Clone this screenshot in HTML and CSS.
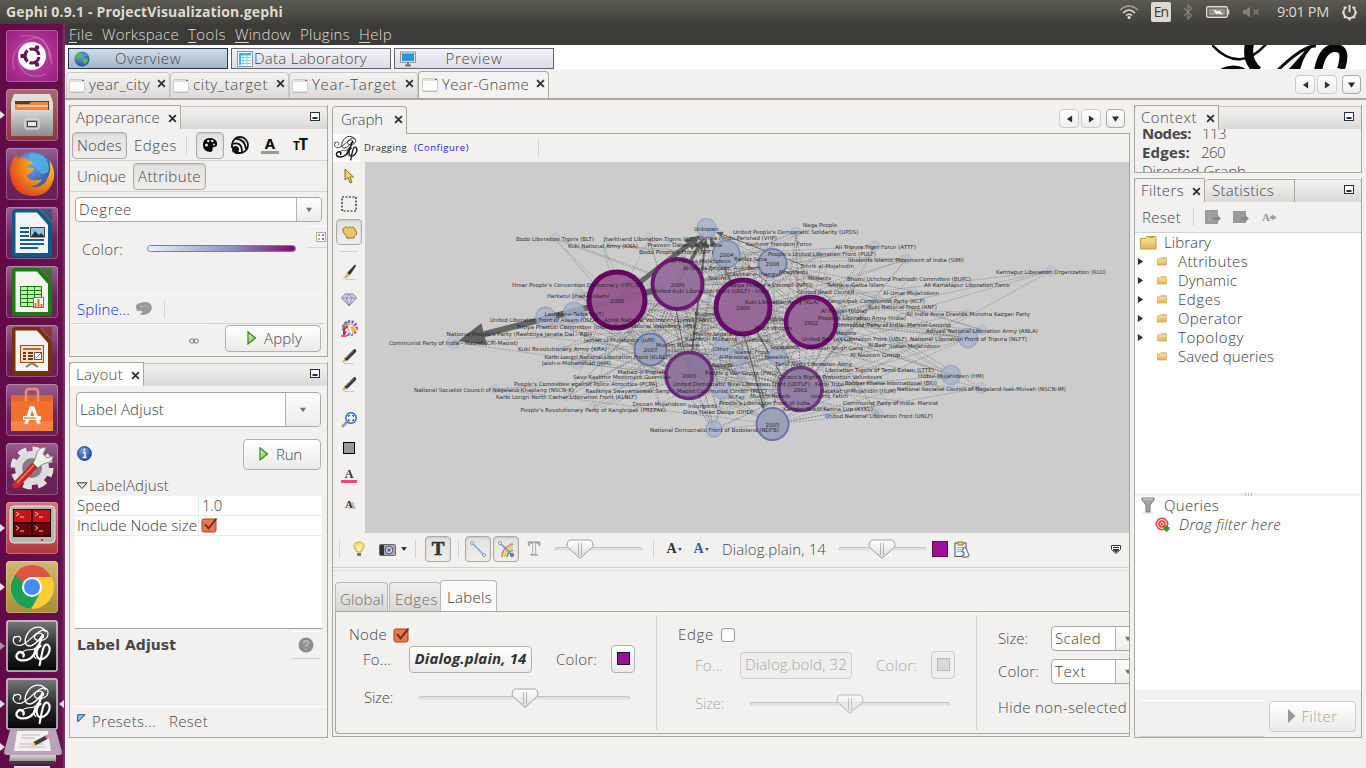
FILE: index.html
```html
<!DOCTYPE html>
<html lang="en">
<head>
<meta charset="utf-8">
<title>Gephi 0.9.1 - ProjectVisualization.gephi</title>
<link rel="stylesheet" href="styles.css">
</head>
<body>
<svg class="defs" width="0" height="0">
  <defs>
    <linearGradient id="metal" x1="0" y1="0" x2="0" y2="1"><stop offset="0" stop-color="#d8d8d6"/><stop offset="1" stop-color="#8c8c8a"/></linearGradient>
    <linearGradient id="blk" x1="0" y1="0" x2="0" y2="1"><stop offset="0" stop-color="#77787a"/><stop offset=".5" stop-color="#2b2c2e"/><stop offset="1" stop-color="#050505"/></linearGradient>
    <linearGradient id="thumb" x1="0" y1="0" x2="0" y2="1"><stop offset="0" stop-color="#fff"/><stop offset="1" stop-color="#dcdad8"/></linearGradient>
    <linearGradient id="green" x1="0" y1="0" x2="1" y2="1"><stop offset="0" stop-color="#e2f5cf"/><stop offset="1" stop-color="#6cc13a"/></linearGradient>
    <linearGradient id="folder" x1="0" y1="0" x2="0" y2="1"><stop offset="0" stop-color="#fbe7a5"/><stop offset="1" stop-color="#e0b450"/></linearGradient>
    <radialGradient id="blue" cx=".4" cy=".3" r=".8"><stop offset="0" stop-color="#6fa8ee"/><stop offset="1" stop-color="#173f96"/></radialGradient>
    <radialGradient id="fox" cx=".75" cy=".25" r=".9"><stop offset="0" stop-color="#ffd83a"/><stop offset=".5" stop-color="#f28a1e"/><stop offset="1" stop-color="#d9381e"/></radialGradient>
    <symbol id="gephi" viewBox="0 0 44 44">
      <g fill="none" stroke="currentColor" stroke-linecap="round">
        <path stroke-width="1.3" d="M4 12C0 17 4 23 11 21C20 18 26 6 34 5C41 5 40 14 33 16C27 18 22 14 26 10C30 7 35 9 34 13"/>
        <path stroke-width="1.5" d="M36 7C33 0 23 1 18 8C13 16 14 22 20 22C26 21 30 14 33 11"/>
        <path stroke-width="2.4" d="M33 11C30 19 27 31 20 35C13 39 4 37 6 31C9 26 15 29 13 33"/>
        <path stroke-width="1.2" d="M4 13C9 10 12 14 9 17M11 30C15 22 24 30 28 21C23 27 23 33 26 35"/>
        <path stroke-width="2.2" d="M31 22C25 25 26 35 31 36C38 35 43 26 39 21C34 18 33 27 30 42"/>
      </g>
    </symbol>
    <symbol id="win" viewBox="0 0 16 14"><rect x=".5" y=".5" width="15" height="12.5" rx="1.5" fill="#fdfdfd" stroke="#cfcdcb"/><path d="M1 2h14" stroke="#e2dfe3" stroke-width="2"/><path d="M13 1.500h2" stroke="#b04a68"/><path d="M1 13.500h14" stroke="#bbb"/></symbol>
    <symbol id="x" viewBox="0 0 8 8"><path d="M1 1L7 7M7 1L1 7" stroke="#2f2f2f" stroke-width="1.6"/></symbol>
    <symbol id="min" viewBox="0 0 10 9"><rect x=".5" y=".5" width="9" height="8" fill="#fff" stroke="#26303f"/><path d="M2.5 6h5" stroke="#26303f" stroke-width="2"/></symbol>
    <symbol id="knob" viewBox="0 0 28 20"><path d="M4 1h20q3 1 3 5q0 2-2 3.500L14.500 19h-1L3 9.500Q1 8 1 6q0-4 3-5z" fill="url(#thumb)" stroke="#a3a19e"/><path d="M12.500 4v12M15.500 4v12" stroke="#b4b2b0"/></symbol>
    <symbol id="play" viewBox="0 0 10 14"><path d="M1 1L8.500 7L1 13z" fill="url(#green)" stroke="#2d8a13" stroke-width="1.200"/></symbol>
    <symbol id="check" viewBox="0 0 17 16"><rect x="1" y="2" width="14" height="13" rx="2" fill="#f0764a" stroke="#a4451f"/><path d="M4 7L7.500 11.500L15.500 1.500" fill="none" stroke="#5a3527" stroke-width="2"/></symbol>
    <symbol id="pencil" viewBox="0 0 16 16"><path d="M3 11L12 2Q14 0 15 2T14 5L6 13z" fill="#3b3b3b"/><path d="M5 10L13 2.500" stroke="#777"/><path d="M3 11L6 13L1 15z" fill="#d9a94e"/><path d="M3 15.500h10" stroke="#c9c8c6"/></symbol>
    <symbol id="fold" viewBox="0 0 17 14"><path d="M.5 13V2.500h5l1-2h9.500V13z" fill="url(#folder)" stroke="#c99c3c"/><path d="M9 1.500h5" stroke="#4fb7e6"/></symbol>
    <symbol id="lt" viewBox="0 0 8 8"><path d="M7 0v8L1 4z" fill="#2e2e2e"/></symbol>
    <symbol id="rt" viewBox="0 0 8 8"><path d="M1 0v8L7 4z" fill="#2e2e2e"/></symbol>
    <symbol id="dn" viewBox="0 0 8 8"><path d="M0 1h8L4 7z" fill="#2e2e2e"/></symbol>
    <symbol id="doc" viewBox="0 0 40 48"><path d="M4 0H27L40 14V45Q40 48 37 48H3Q0 48 0 45V3Q0 0 4 0z" fill="currentColor"/><path d="M3.500 3.500H25L36 16V44H3.500z" fill="#f4f4f4"/><path d="M28 0H40V12z" fill="currentColor" opacity=".7"/></symbol>
  </defs>
</svg>

<header class="topbar">
  <span class="title" data-w="277">Gephi 0.9.1 - ProjectVisualization.gephi</span>
  <div class="tray">
    <svg width="20" height="14" viewBox="0 0 20 14" fill="none" stroke="#dfdbd2" stroke-width="1.600"><path d="M1 5Q10-3 19 5" opacity=".6"/><path d="M4 8Q10 2 16 8"/><path d="M7 10.500Q10 8 13 10.500"/><circle cx="10" cy="12.500" r=".8"/></svg>
    <span class="lang">En</span>
    <svg width="10" height="16" viewBox="0 0 10 16" fill="none" stroke="#85827b" stroke-width="1.300"><path d="M1 4L8.500 11.500L5 15V1L8.500 4.500L1 12"/></svg>
    <svg width="24" height="14" viewBox="0 0 24 14"><rect x=".7" y="1.700" width="20.600" height="10.600" rx="1.500" fill="none" stroke="#dfdbd2" stroke-width="1.400"/><rect x="2.500" y="3.500" width="17" height="7" fill="#96938c"/><path d="M22.500 4.500v5" stroke="#dfdbd2" stroke-width="1.500"/><path d="M7 4.500L12.500 6.500L13 5L17 9.500L11 8.500L10.500 9.500z" fill="#fff"/></svg>
    <svg width="18" height="12" viewBox="0 0 18 12"><path d="M1 4h3l4-3.500v11L4 8H1z" fill="#85827b"/><path d="M11.500 3.500l5 5m0-5l-5 5" stroke="#85827b" stroke-width="1.300"/></svg>
    <span class="clock" data-w="52">9:01 PM</span>
    <svg width="17" height="17" viewBox="0 0 17 17" fill="none" stroke="#dfdbd2"><path d="M5.500 3A6 6 0 1 0 11.500 3M8.500 1v7" stroke-width="1.900"/><path d="M1 8.500h2M14 8.500h2M8.500 14v2.500M3 3l1.500 1.500M14 3l-1.500 1.500M3 14l1.500-1.500M14 14l-1.500-1.500" stroke-width="2.200"/></svg>
  </div>
</header>

<div class="screen">
  <nav class="launcher">
    <div class="tile dash"><svg viewBox="0 0 52 52"><path d="M8 40Q2 20 22 10T46 34M14 6Q42 2 44 30M40 44Q20 52 12 32" fill="none" stroke="#e58ad0" opacity=".6"/><circle cx="26" cy="26" r="14" fill="#fff"/><circle cx="26" cy="26" r="7" fill="none" stroke="#6a1452" stroke-width="3.200" stroke-dasharray="12.400 2.260" stroke-dashoffset="-1"/><g fill="#6a1452"><circle cx="16.500" cy="26" r="2.300"/><circle cx="31" cy="17.500" r="2.300"/><circle cx="31" cy="34.500" r="2.300"/></g></svg></div>
    <div class="tile files"><i class="pip"></i><svg viewBox="0 0 52 52"><path d="M8 5h36l3 8v8H5v-8z" fill="#dededc"/><rect x="9" y="12" width="34" height="10" fill="#5c3a2a"/><path d="M9 15h14l2-2h17v8H9z" fill="#f0843c"/><path d="M11 17h31" stroke="#fff"/><rect x="5" y="21" width="42" height="26" rx="1" fill="url(#metal)"/><rect x="19" y="30" width="14" height="10" rx="2" fill="#aaa" stroke="#eee"/><rect x="21.500" y="32.500" width="9" height="5" fill="#eee" stroke="#444"/></svg></div>
    <div class="tile plain"><svg viewBox="0 0 52 52"><circle cx="27" cy="25" r="21" fill="url(#blue)"/><path d="M24 5Q39 4 42 15T36 26Q30 20 22 13z" fill="#53b6e8" opacity=".8"/><path d="M5 16Q8 8 11 7L12 11Q18 8 22 12L27 15Q20 18 20 20L28 20Q27 24 22 26Q20 30 26 32Q32 33 36 31Q33 38 24 38Q37 42 42 29Q46 21 43 12Q49 19 48 30Q44 48 26 48Q9 47 5 31Q3 23 5 16z" fill="url(#fox)"/></svg></div>
    <div class="tile plain writer"><svg viewBox="0 0 52 52"><svg x="6" y="2" width="40" height="48"><use href="#doc"/></svg><g stroke="#17618f" stroke-width="2"><path d="M14 21h9M14 25h9M14 29h9M14 33h24M14 37h24M14 41h18"/></g><rect x="24.500" y="20.500" width="14" height="9.500" fill="#8fc4e8" stroke="#444"/><path d="M25 30l4-6 4 4 2-2 4 4z" fill="#333"/></svg></div>
    <div class="tile plain calc"><svg viewBox="0 0 52 52"><svg x="6" y="2" width="40" height="48"><use href="#doc"/></svg><path d="M14.500 20.500h21v20h-21zM14.500 24.500h21M14.500 28.500h21M14.500 32.500h21M14.500 36.500h21M21.500 20.500v20M28.500 20.500v20" fill="#bdf0a8" stroke="#187d0c"/><rect x="27.500" y="31.500" width="10" height="10" fill="#fff" stroke="#777"/><path d="M29.500 41v-4M32.500 41v-8M35.500 41v-3" stroke="#e06a2c" stroke-width="2"/></svg></div>
    <div class="tile plain impress"><svg viewBox="0 0 52 52"><svg x="6" y="2" width="40" height="48"><use href="#doc"/></svg><rect x="14.500" y="20.500" width="23" height="17" fill="#fbe3cf" stroke="#a84a10"/><path d="M17 24h18" stroke="#d06020" stroke-width="2"/><path d="M17 28h3m2 0h5M17 31h3m2 0h5M17 34h3m2 0h5" stroke="#7a3008" stroke-width="2"/><rect x="28.500" y="27.500" width="7" height="7" fill="#fff" stroke="#555"/><path d="M30 33l5-5" stroke="#3a3"/><path d="M20 42l6-4 6 4" stroke="#777" stroke-width="2" fill="none"/></svg></div>
    <div class="tile plain"><svg viewBox="0 0 52 52"><path d="M5 11h42v36H5z" fill="#f0702c"/><path d="M5 11h42v6H5z" fill="#d9682f"/><path d="M5 37h42v10H5z" fill="#f78442"/><path d="M20 17V8q0-3 3-3h6q3 0 3 3v9" fill="none" stroke="#eb9068" stroke-width="2.500"/><path d="M20 40L25 24h2l6 16" fill="none" stroke="#fff" stroke-width="3.500"/><path d="M17 34h18" stroke="#fff" stroke-width="4"/><path d="M18 34h12" stroke="#f0702c" stroke-width="1.200"/></svg></div>
    <div class="tile plain"><svg viewBox="0 0 52 52"><circle cx="26" cy="25" r="18.500" fill="none" stroke="#e2e2e2" stroke-width="6" stroke-dasharray="8.500 6.030"/><circle cx="26" cy="25" r="13.500" fill="#8a7a86" stroke="#dcdcdc" stroke-width="7"/><path d="M10 42L29 22" stroke="#c9281f" stroke-width="7" stroke-linecap="round"/><path d="M11 40L28 22" stroke="#f08070" stroke-width="1.500"/><path d="M27 20Q30 16 31 9Q35 3 40 5L37 11L41 15L47 13Q47 19 40 20Q35 21 32 25z" fill="#f0f0ee" stroke="#888"/></svg></div>
    <div class="tile term"><i class="pip"></i><svg viewBox="0 0 52 52"><rect x="4" y="4" width="45" height="37" rx="4" fill="#b6b6b0" stroke="#e8e8e4"/><rect x="7" y="7" width="38" height="28" fill="#2a0505"/><path d="M8 8h17v12H8zM27 8h17v12H27z" fill="#c81414"/><path d="M8 22h17v11H8zM27 22h17v11H27z" fill="#6d0606"/><g fill="none" stroke="#f3b9b9"><path d="M10 10l3 2-3 2m4 1h4M29 10l3 2-3 2m4 1h4M10 24l3 2-3 2m4 1h4M29 24l3 2-3 2m4 1h4"/></g><circle cx="36" cy="38" r="1" fill="#e00"/></svg></div>
    <div class="tile chrome"><i class="pip"></i><svg viewBox="0 0 52 52"><circle cx="26" cy="26" r="22" fill="#fccb38"/><path d="M26 26L8 15Q14 4 26 4Q39 4 45 16H26z" fill="#dd5446"/><path d="M26 26L8.500 14.500Q0 28 10 41Q16 47 25 48L34 32z" fill="#1e9f58"/><circle cx="26" cy="26" r="10" fill="#fff"/><circle cx="26" cy="26" r="8" fill="#4a8af4"/></svg></div>
    <div class="tile geph"><i class="pip open"></i><svg viewBox="0 0 52 52"><rect x="1" y="1" width="50" height="50" rx="2" fill="url(#blk)" stroke="#cfcbd2" stroke-width="1.500"/><svg x="4" y="5" width="44" height="42" color="#fff"><use href="#gephi"/></svg></svg></div>
    <div class="tile geph last"><i class="pip"></i><i class="pip right"></i><svg viewBox="0 0 52 52"><rect x="1" y="1" width="50" height="50" rx="2" fill="url(#blk)" stroke="#cfcbd2" stroke-width="1.500"/><svg x="4" y="5" width="44" height="42" color="#fff"><use href="#gephi"/></svg></svg></div>
    <div class="stack"><i class="pip"></i><svg width="58" height="38" viewBox="0 0 58 38"><path d="M6 0h46l6 22q0 3-3 3H3q-3 0-3-3z" fill="#b9a3b8"/><path d="M13 1h31l3 20H10z" fill="#f2f0ee"/><path d="M18 5h18M17 8h14M16 14h24M15 17h26" stroke="#bdbdbd"/><path d="M30 14L43 7" stroke="#3d3d3d" stroke-width="4"/><path d="M42 7.500l5-2.500" stroke="#e58bb0" stroke-width="4"/><path d="M26 17l4-5 2 3.500z" fill="#e8d36a"/><path d="M6 25h46v7H5z" fill="url(#metal)"/><path d="M5 31h46v3H5z" fill="#3c3c3a"/><path d="M10 36h36v2H10z" fill="#ddd"/></svg></div>
  </nav>

  <main class="app">
    <div class="menubar">
      <span data-w="24"><u>F</u>ile</span><span data-w="77">Workspace</span><span data-w="38"><u>T</u>ools</span><span data-w="56"><u>W</u>indow</span><span data-w="50">Plugins</span><span data-w="33"><u>H</u>elp</span>
    </div>

    <div class="perspectives">
      <div class="persp on"><svg width="16" height="16" viewBox="0 0 16 16"><circle cx="8" cy="8" r="7.500" fill="url(#blue)"/><path d="M3 3q4-3 6 0l-2 3-3 1-1 2-2-2zM9 8l4-1 1 3-3 4-2-3zM11 2l3 3-3 0z" fill="#57b845"/></svg><span data-w="66">Overview</span></div>
      <div class="persp data"><svg width="16" height="16" viewBox="0 0 16 16"><rect x=".5" y=".5" width="15" height="15" fill="#fff" stroke="#7a9ab0"/><rect x="2" y="2" width="12" height="2.500" fill="#35b6e8"/><path d="M2 6.500h12M2 9.500h12M2 12.500h12M6 4v10M10 4v10" stroke="#86cfe8"/><path d="M3 4v10" stroke="#35b6e8" stroke-width="2"/></svg><span data-w="113">Data Laboratory</span></div>
      <div class="persp"><svg width="16" height="16" viewBox="0 0 16 16"><rect x=".5" y="1" width="15" height="10.500" fill="#dedede" stroke="#999"/><rect x="2" y="2.500" width="12" height="7.500" fill="#2f93d8"/><path d="M8 11v4M5 14.500h6" stroke="#777" stroke-width="2"/></svg><span data-w="57">Preview</span></div>
      <svg class="brand" width="140" height="24" viewBox="0 0 140 24" fill="none" stroke="#050808"><path d="M0 0Q28 30 56-3" stroke-width="2.500"/><path d="M38-3Q33 15 46 26" stroke-width="9"/><path d="M10 25Q22 20 32 25" stroke-width="4"/><path d="M66 25Q92 0 104 1" stroke-width="3"/><path d="M76 25Q88 12 96 2L103 0Q92 8 88 25z" fill="#050808" stroke="none"/><path d="M106 26Q110 3 123 3T129 24" stroke-width="8"/></svg>
    </div>

    <div class="wtabs">
      <div class="wtab t1"><svg><use href="#win"/></svg><span data-w="61">year_city</span><svg class="x"><use href="#x"/></svg></div>
      <div class="wtab t2"><svg><use href="#win"/></svg><span data-w="75">city_target</span><svg class="x"><use href="#x"/></svg></div>
      <div class="wtab t3"><svg><use href="#win"/></svg><span data-w="85">Year-Target</span><svg class="x"><use href="#x"/></svg></div>
      <div class="wtab t4 on"><svg><use href="#win"/></svg><span data-w="87">Year-Gname</span><svg class="x"><use href="#x"/></svg></div>
      <div class="navs"><b><svg><use href="#lt"/></svg></b><b><svg><use href="#rt"/></svg></b><b class="dd"><svg><use href="#dn"/></svg></b></div>
    </div>

    <div class="columns">
      <div class="col left">
        <section class="panel appearance">
          <div class="ptabs"><div class="ptab"><span data-w="84">Appearance</span><svg class="x"><use href="#x"/></svg></div><div class="strip"><svg class="min"><use href="#min"/></svg></div></div>
          <div class="row modes">
            <i></i><span class="tbtn"><span data-w="45">Nodes</span></span><i></i><span data-w="43">Edges</span><i class="vs"></i>
            <span class="tbtn"><svg width="16" height="16" viewBox="0 0 16 16"><path fill-rule="evenodd" d="M8 1q7 0 7 6.500Q15 10 12 10q-2 0-1.500 2T9 15Q1 15 1 8Q1 1 8 1zM3 8a1.500 1.500 0 1 0 3 0a1.500 1.500 0 1 0-3 0M5 4a1.300 1.300 0 1 0 2.600 0a1.300 1.300 0 1 0-2.600 0M9 4a1.300 1.300 0 1 0 2.600 0a1.300 1.300 0 1 0-2.600 0M11 7.500a1 1 0 1 0 2 0a1 1 0 1 0-2 0" fill="#000"/></svg></span>
            <svg width="20" height="20" viewBox="0 0 20 20" fill="none" stroke="#111" stroke-width="1.800"><path d="M2 13V9.500A8 8 0 1 1 10 18H5M2 9Q12 6 12 17M5 3.500Q15 4 16 14"/><circle cx="5.500" cy="14.500" r="3.500" fill="#111" stroke="none"/></svg>
            <span class="acol">A</span>
            <span class="tt"><small>T</small>T</span>
          </div>
          <div class="row kinds"><span data-w="49">Unique</span><span class="tbtn"><span data-w="63">Attribute</span></span></div>
          <div class="combo c1"><span data-w="53">Degree</span><b><svg><use href="#dn"/></svg></b></div>
          <div class="row color"><span data-w="41">Color:</span><div class="ramp"></div><div class="pal"><svg width="10" height="10" viewBox="0 0 10 10"><rect x=".5" y=".5" width="9" height="9" fill="#fff" stroke="#aaa"/><path d="M2 2h2v2H2z" fill="#7ac36a"/><path d="M6 2h2v2H6z" fill="#e0559a"/><path d="M2 6h2v2H2z" fill="#f0a03c"/><path d="M6 6h2v2H6z" fill="#6a6ad0"/></svg></div></div>
          <div class="row spline"><span data-w="53">Spline...</span><svg width="18" height="16" viewBox="0 0 18 16"><path d="M2 10Q-1 3 5 2Q14-1 16 4Q18 8 15 11Q12 14 6 14Q4 13 8 11Q5 9 2 10z" fill="#9b9a98"/><path d="M5 5l3 1m2-2l3 2" stroke="#c4c3c1"/></svg><i></i></div>
          <div class="row apply"><div class="linkbox"><svg width="10" height="6" viewBox="0 0 10 6" fill="none" stroke="#777"><rect x=".5" y="1" width="5" height="4" rx="2"/><rect x="4.500" y="1" width="5" height="4" rx="2"/></svg></div><span class="btn"><svg class="play"><use href="#play"/></svg><span data-w="38">Apply</span></span></div>
        </section>

        <section class="panel layout">
          <div class="ptabs"><div class="ptab white"><span data-w="47">Layout</span><svg class="x"><use href="#x"/></svg></div><div class="strip"><svg class="min"><use href="#min"/></svg></div></div>
          <div class="combo c2"><span data-w="84">Label Adjust</span><b><svg><use href="#dn"/></svg></b></div>
          <div class="row run"><svg width="15" height="15" viewBox="0 0 15 15"><circle cx="7.500" cy="7.500" r="6.900" fill="url(#blue)" stroke="#1d4790"/><path d="M6 6.500h2v5M5.500 11.500h4" stroke="#fff" stroke-width="1.500" fill="none"/><circle cx="7.500" cy="3.700" r="1.100" fill="#fff"/></svg><span class="btn"><svg class="play"><use href="#play"/></svg><span data-w="26">Run</span></span></div>
          <div class="group"><svg width="12" height="8" viewBox="0 0 12 8"><path d="M1 .8h10L6 6.500z" fill="none" stroke="#333"/></svg><span data-w="80">LabelAdjust</span></div>
          <div class="props">
            <div class="prop"><span><em data-w="43">Speed</em></span><span><em data-w="20">1.0</em></span></div>
            <div class="prop"><span><em data-w="120">Include Node size</em></span><span class="ck"><svg width="17" height="16"><use href="#check"/></svg></span></div>
          </div>
          <div class="desc"><strong data-w="99">Label Adjust</strong><div class="help"><svg width="16" height="16" viewBox="0 0 16 16"><circle cx="8" cy="8" r="7.500" fill="#8d8c8b"/><path d="M5.500 6.500Q5.500 4 8 4T10.500 6.500Q10 8 8 8.500V10M8 11.200V13" fill="none" stroke="#b9b8b7" stroke-width="1.800"/></svg></div></div>
          <div class="presets"><svg width="9" height="9" viewBox="0 0 9 9"><path d="M.7.700h7.300L.7 8z" fill="#8fc0ee" stroke="#1f5591"/></svg><span data-w="64">Presets...</span><span data-w="39">Reset</span></div>
        </section>
      </div>

      <section class="graphpanel">
        <div class="gtabs"><div class="gtab"><span data-w="42">Graph</span><svg class="x"><use href="#x"/></svg></div><div class="navs"><b><svg><use href="#lt"/></svg></b><b><svg><use href="#rt"/></svg></b><b class="dd"><svg><use href="#dn"/></svg></b></div></div>
        <div class="gbody">
          <div class="status"><div class="glogo"><svg width="26" height="26"><use href="#gephi"/></svg></div><span data-w="43">Dragging</span><a data-w="55">(Configure)</a><i></i></div>
          <div class="work">
            <div class="tools">
              <div><svg width="10" height="16" viewBox="0 0 10 16"><path d="M1 1v11l3-2.500L6 15l2-1-2-5h3.500z" fill="#f2cf7a" stroke="#8f6a20"/></svg></div>
              <div><svg width="16" height="16" viewBox="0 0 16 16"><rect x="1" y="1" width="14" height="14" fill="none" stroke="#111" stroke-width="1.200" stroke-dasharray="2 1.500"/></svg></div>
              <div><span class="tbtn"><svg width="15" height="13" viewBox="0 0 16 14"><path d="M1 3l3-2 2 1 2-1.500 2 1.500 2-1 2 2v2l1.500 1v3l-2.500 2.500V13H5v-2L3 9 1 6z" fill="#eec56c" stroke="#8f6a28"/></svg></span></div>
              <hr>
              <div><svg width="16" height="16" viewBox="0 0 16 16"><path d="M6 9L14 .5 15 2 9 11z" fill="#333"/><path d="M6 9l3 2-3 3-5 .5 3-2z" fill="#d8b564"/><path d="M4 15.500h10" stroke="#ccc"/></svg></div>
              <div><svg width="16" height="15" viewBox="0 0 16 15"><path d="M4 1h8l3.500 4L8 13 .5 5z" fill="#cfcfe8" stroke="#8785ac"/><path d="M.5 5h15M5 5l3 8 3-8-3-4z" fill="none" stroke="#9492b6"/></svg></div>
              <div><svg width="17" height="17" viewBox="0 0 17 17"><circle cx="9" cy="8" r="6.500" fill="none" stroke="#8b52cc" stroke-width="3" stroke-dasharray="2 1.500"/><path d="M2 8a7 7 0 0 1 6-6" fill="none" stroke="#53b04b" stroke-width="2.500" stroke-dasharray="2 1.500"/><path d="M5 5l6-1 5 5-6 6z" fill="#f4f0ea" stroke="#b9a"/><path d="M9 7l3-1 3 4-3 3z" fill="#f2b62f"/><path d="M3 15V9l4-3" stroke="#cf2a2a" stroke-width="2" fill="none"/><path d="M0 16h6" stroke="#d33" stroke-width="1.500"/></svg></div>
              <div><svg width="16" height="16"><use href="#pencil"/></svg></div>
              <div><svg width="16" height="16"><use href="#pencil"/></svg></div>
              <div class="gap"><svg width="16" height="17" viewBox="0 0 16 17"><path d="M1 15l5-5" stroke="#999" stroke-width="2.500"/><circle cx="10" cy="6" r="5.200" fill="#eef4ff" stroke="#2d5fd2" stroke-width="1.400"/><path d="M7.500 5V3.500H9M11 3.500h1.500V5M12.500 7v1.500H11M9 8.500H7.500V7" fill="none" stroke="#2d5fd2" stroke-width="1.200"/></svg></div>
              <div><svg width="12" height="12"><rect x=".5" y=".5" width="11" height="11" fill="#999" stroke="#000"/></svg></div>
              <div><span class="pink">A</span></div>
              <div><span class="shade">A</span></div>
            </div>
            <svg id="graph" width="764" height="371" viewBox="365 162 764 371"></svg>
          </div>
          <div class="vizbar">
            <i class="vs"></i>
            <svg width="12" height="17" viewBox="0 0 12 17"><path d="M4 11Q1 8 1 5.500Q1 1 6 1t5 4.500Q11 8 8 11z" fill="#f8e36c" stroke="#c2a93c"/><path d="M4 12h4v3H4z" fill="#777"/><path d="M4.500 5L6 10l1.500-5" fill="none" stroke="#fff"/></svg>
            <svg width="17" height="13" viewBox="0 0 17 13"><rect x=".5" y="1.500" width="16" height="11" rx="1" fill="#a9abb0" stroke="#666"/><path d="M1 2h4v10H1z" fill="#333"/><circle cx="10" cy="7" r="3.800" fill="#d7dbe6" stroke="#4a5368"/><circle cx="10" cy="7" r="1.700" fill="#4f67a5"/></svg>
            <svg width="6" height="4"><path d="M0 0h6L3 4z" fill="#333"/></svg>
            <i class="vs"></i>
            <span class="tbtn sq"><span class="bigT">T</span></span>
            <i class="vs"></i>
            <span class="tbtn sq"><svg width="18" height="18" viewBox="0 0 18 18"><path d="M3 3l12 12" stroke="#6fa0d8" stroke-width="1.300"/><circle cx="3" cy="3" r="1.500" fill="#fff" stroke="#6fa0d8"/><circle cx="15" cy="15" r="1.500" fill="#fff" stroke="#6fa0d8"/></svg></span>
            <i></i>
            <span class="tbtn sq"><svg width="18" height="18" viewBox="0 0 18 18" fill="none"><path d="M5 17Q5 7 16 4" stroke="#e78a76" stroke-width="2"/><path d="M7.500 17Q8 9 16 7" stroke="#e8cf5e" stroke-width="2"/><path d="M10 17Q11 11 16 10" stroke="#6cbb5f" stroke-width="2"/><path d="M3 3l12 12" stroke="#6f88d8" stroke-width="1.300"/><circle cx="3" cy="3" r="1.500" fill="#fff" stroke="#6fa0d8"/><circle cx="15" cy="15" r="1.500" fill="#b9e" stroke="#53c"/></svg></span>
            <span class="outT">T</span>
            <i></i>
            <div class="slider"><svg style="left:10px"><use href="#knob"/></svg></div>
            <i class="vs"></i>
            <span class="fa">A<svg width="4" height="3"><path d="M0 0h4L2 3z" fill="#2e58b8"/></svg></span>
            <span class="fa bl">A<svg width="4" height="3"><path d="M0 0h4L2 3z" fill="#2e58b8"/></svg></span>
            <i></i>
            <span class="dlg" data-w="104">Dialog.plain, 14</span>
            <i></i>
            <div class="slider"><svg style="left:28px"><use href="#knob"/></svg></div>
            <i></i>
            <span class="swatch"></span>
            <i></i>
            <svg width="16" height="17" viewBox="0 0 16 17"><rect x="1" y="2" width="11" height="13.500" fill="#eef3fa" stroke="#44546e"/><path d="M4 1h5v3H4z" fill="#f5d27a" stroke="#a07620"/><path d="M3 6.500h7M3 8.500h4M3 10.500h4" stroke="#9fb2d0"/><path d="M9 7q4-1 4 3l2 4q0 2-2 2H8q-1-2 2-2V11H8q-1-2 1-2z" fill="#fff" stroke="#44546e"/></svg>
            <i></i>
            <svg class="more" width="10" height="9" viewBox="0 0 10 9"><path d="M.5.500h9v4L5 8.500.5 4.500z" fill="#fff" stroke="#333"/><path d="M2 2.500h6" stroke="#333"/><path d="M2 4.500h6L5 7z" fill="#333" stroke="#333"/></svg>
          </div>
          <div class="setTabs"><span class="st"><b data-w="44">Global</b></span><span class="st"><b data-w="43">Edges</b></span><span class="st on"><b data-w="45">Labels</b></span></div>
          <div class="settings">
            <div class="set">
              <div class="line l1"><span data-w="38">Node</span><svg width="17" height="16"><use href="#check"/></svg></div>
              <div class="line l2"><span data-w="28">Fo...</span><span class="btn font bi"><span data-w="112">Dialog.plain, 14</span></span><span class="cl" data-w="41">Color:</span><span class="btn chip"><i></i></span></div>
              <div class="line l3"><span data-w="29">Size:</span><div class="slider wide"><svg style="left:91px"><use href="#knob"/></svg></div></div>
            </div>
            <div class="set two">
              <div class="line l1"><span data-w="36">Edge</span><i class="box"></i></div>
              <div class="line l2"><span data-w="28">Fo...</span><span class="btn font"><span data-w="102">Dialog.bold, 32</span></span><span class="cl" data-w="41">Color:</span><span class="btn chip"><i></i></span></div>
              <div class="line l3"><span data-w="29">Size:</span><div class="slider wide"><svg style="left:85px"><use href="#knob"/></svg></div></div>
            </div>
            <div class="set three">
              <div class="opt"><span data-w="30">Size:</span><div class="combo"><span data-w="46">Scaled</span><b><svg><use href="#dn"/></svg></b></div></div>
              <div class="opt"><span data-w="41">Color:</span><div class="combo"><span data-w="31">Text</span><b><svg><use href="#dn"/></svg></b></div></div>
              <div class="hide"><span data-w="129">Hide non-selected</span></div>
            </div>
          </div>
        </div>
      </section>

      <div class="col right">
        <section class="panel context">
          <div class="ptabs"><div class="ptab"><span data-w="56">Context</span><svg class="x"><use href="#x"/></svg></div><div class="strip"><svg class="min"><use href="#min"/></svg></div></div>
          <div class="clip"><div class="stats">
            <div><strong data-w="49">Nodes:</strong><span data-w="24">113</span></div>
            <div><strong data-w="48">Edges:</strong><span data-w="24">260</span></div>
            <div><span data-w="104">Directed Graph</span></div>
          </div></div>
        </section>
        <section class="panel filters">
          <div class="ptabs"><div class="ptab"><span data-w="43">Filters</span><svg class="x"><use href="#x"/></svg></div><div class="ptab off"><span data-w="62">Statistics</span></div><div class="strip"><svg class="min"><use href="#min"/></svg></div></div>
          <div class="fbar"><span data-w="39">Reset</span><i></i><svg width="17" height="16" viewBox="0 0 17 16"><path d="M1 1h13v14H1z" fill="#9b9a99"/><path d="M2 4h11M2 7h11M2 10h11M5 2v12" stroke="#a9a8a7"/><path d="M9 8h4V6l4 3.500-4 3.500v-2H9z" fill="#8b8a89"/></svg><svg width="17" height="16" viewBox="0 0 17 16"><path d="M1 2h13v12H1z" fill="#9b9a99"/><path d="M9 8h4V6l4 3.500-4 3.500v-2H9z" fill="#8b8a89"/></svg><span class="aplus">A<svg width="7" height="7" viewBox="0 0 9 8"><path d="M0 3h3V1l5 3-5 3V5H0z" fill="#999" stroke="#999"/></svg></span></div>
          <div class="tree">
            <div class="root"><svg width="17" height="14"><use href="#fold"/></svg><span data-w="47">Library</span></div>
            <div class="node"><svg class="ar"><use href="#rt"/></svg><svg class="fo"><use href="#fold"/></svg><span data-w="70">Attributes</span></div>
            <div class="node"><svg class="ar"><use href="#rt"/></svg><svg class="fo"><use href="#fold"/></svg><span data-w="59">Dynamic</span></div>
            <div class="node"><svg class="ar"><use href="#rt"/></svg><svg class="fo"><use href="#fold"/></svg><span data-w="43">Edges</span></div>
            <div class="node"><svg class="ar"><use href="#rt"/></svg><svg class="fo"><use href="#fold"/></svg><span data-w="65">Operator</span></div>
            <div class="node"><svg class="ar"><use href="#rt"/></svg><svg class="fo"><use href="#fold"/></svg><span data-w="66">Topology</span></div>
            <div class="node"><svg class="ar"></svg><svg class="fo"><use href="#fold"/></svg><span data-w="96">Saved queries</span></div>
          </div>
          <div class="split"><i></i><i></i><i></i></div>
          <div class="queries">
            <div class="q1"><svg width="14" height="17" viewBox="0 0 14 17"><path d="M1 1h12v2L9 8v7H5V8L1 3z" fill="#a5a5b0" stroke="#777"/><path d="M2 2h10" stroke="#ddd"/><path d="M2 16h10" stroke="#ccc"/></svg><span data-w="55">Queries</span></div>
            <div class="q2"><svg width="16" height="16" viewBox="0 0 16 16"><circle cx="7" cy="7" r="6.500" fill="#e9434a"/><circle cx="7" cy="7" r="4.300" fill="none" stroke="#fbd4d4" stroke-width="1.300"/><circle cx="7" cy="7" r="1.600" fill="none" stroke="#fbd4d4"/><path d="M11.500 8.500v6M8.500 11.500h6" stroke="#22a522" stroke-width="2.800"/></svg><span data-w="102">Drag filter here</span></div>
          </div>
          <div class="ffoot"><div class="fl"></div><span class="btn"><svg width="8" height="14"><path d="M0 0l7.500 7L0 14z" fill="#999"/></svg><span data-w="36">Filter</span></span></div>
        </section>
      </div>
    </div>
  </main>
</div>
<script src="script.js"></script>
</body>
</html>
```

FILE: styles.css
```css
* { box-sizing: border-box; }
body {
  margin: 0; width: 1366px; height: 768px; overflow: hidden;
  background: #f2f1f0; color: #484848;
  font: 300 15px/19px "Open Sans", "Noto Sans", sans-serif;
  display: flex; flex-direction: column;
}
svg { display: block; flex: none; }
i, em { font-style: normal; }
b { font-weight: 300; }
.defs { position: absolute; }
[data-w] { white-space: nowrap; display: inline-block; flex: none; }

.topbar { height: 24px; flex: none; background: linear-gradient(#5b5a52, #403f3a); display: flex; justify-content: space-between; padding: 0 8px 0 6px; align-items: center; color: #dfdbd2; }
.title { font: 700 14px/24px "Open Sans", sans-serif; }
.tray { display: flex; align-items: center; }
.lang { width: 20px; height: 20px; background: #dfdbd2; color: #3c3b37; border-radius: 2px; font: 500 14px/20px "Open Sans", sans-serif; text-align: center; margin: 0 12px 0 12px; letter-spacing: -1px; }
.tray svg:nth-of-type(2) { margin-right: 13px; }
.tray svg:nth-of-type(3) { margin-right: 12px; }
.clock { font: 400 14.500px/24px "Open Sans", sans-serif; margin: 0 12px 0 17px; }

.screen { display: flex; flex: 1; min-height: 0; }
.launcher { width: 65px; flex: none; background: linear-gradient(90deg, #620947 0, #68104f 62px, #7d3068 64px); padding: 6px 0 0 6px; display: flex; flex-direction: column; gap: 7px; overflow: hidden; }
.tile { position: relative; width: 52px; height: 52px; flex: none; border-radius: 4px; box-shadow: inset 0 0 0 1px rgba(255,255,255,.25); background: linear-gradient(#9a5f8b, #6d2359 60%, #6a2057); }
.tile > svg { width: 52px; height: 52px; }
.dash { background: radial-gradient(#c04aa6, #971b7d); }
.files { background: linear-gradient(#a96a70, #8a3340); }
.term { background: linear-gradient(#d2767a, #b3383f); }
.chrome { background: linear-gradient(#d0b978, #ab8b35); }
.plain.writer { color: #0e5a86; }
.plain.calc { color: #187d0c; }
.plain.impress { color: #7a3008; }
.geph { box-shadow: none; }
.last { margin-top: -1px; }
.pip { position: absolute; left: -6px; top: 22px; border: 4px solid transparent; border-left: 5px solid #e6dfe4; border-right: 0; }
.pip.right { left: 53px; border-left: 0; border-right: 5px solid #e6dfe4; }
.pip.open { border-left-color: #ae8ca6; }
.stack { position: relative; margin: -7px 0 0 -2px; }
.stack .pip { left: -4px; top: 13px; }

.app { flex: 1; display: flex; flex-direction: column; min-width: 0; }
.menubar { height: 21px; flex: none; background: #3c3b37; color: #dfdbd2; display: flex; padding-left: 4px; gap: 9px; line-height: 21px; }
.menubar u { text-underline-offset: 2px; text-decoration-thickness: 1px; }
.perspectives { height: 24px; flex: none; background: #fff; display: flex; padding: 3px 0 0 3px; gap: 3px; }
.persp { width: 160px; height: 21px; border: 1px solid #5f6470; background: linear-gradient(#f2f2f7, #dcdde6); display: flex; align-items: center; padding-left: 5px; }
.persp.on { border-color: #25364c; background: linear-gradient(#cfdcea, #a3b5ce); }
.persp span { flex: 1; text-align: center; padding-right: 21px; }
.persp.data span { padding: 0; flex: none; margin-left: 1px; }
.brand { margin-left: auto; margin-right: 14px; margin-top: -3px; }

.wtabs { height: 31px; flex: none; display: flex; align-items: flex-end; border-bottom: 2px solid #aca89f; padding-left: 1px; }
.wtab { height: 26px; border: 1px solid #c9c7c4; border-bottom: 0; border-radius: 4px 4px 0 0; background: linear-gradient(#f4f3f2, #dddbd9); display: flex; align-items: center; padding: 0 0 2px 2px; }
.wtab.on { height: 27px; background: #f4f3f2; border-color: #aaa79f; padding-left: 3px; }
.wtab > svg:first-child { width: 16px; height: 14px; margin-right: 4px; margin-top: 2px; }
.x { width: 9px; height: 9px; }
.wtab .x { margin-left: auto; margin-right: 3px; margin-bottom: 2px; }
.t1 { width: 104px; } .t2 { width: 119px; } .t3 { width: 129px; } .t4 { width: 131px; }
.navs { margin-left: auto; display: flex; gap: 2px; }
.wtabs .navs { margin-right: 5px; margin-bottom: 4px; }
.navs b { width: 20px; height: 19px; border: 1px solid #cfcdca; border-radius: 4px; background: linear-gradient(#fff, #efeeed); display: flex; align-items: center; justify-content: center; }
.navs b svg { width: 7px; height: 8px; }
.navs .dd { border-color: #aaa8a5; margin-left: 3px; width: 19px; }

.columns { flex: 1; display: grid; grid-template-columns: 259px 798px 228px; gap: 4px; padding: 5px 0 0 4px; }
.col { display: grid; align-content: start; }
.left { grid-template-rows: 252px 376px; row-gap: 5px; }
.right { grid-template-rows: 68px 560px; row-gap: 5px; }
.panel { border: 1px solid #aaa79f; border-top: 0; display: flex; flex-direction: column; overflow: hidden; }
.ptabs { display: flex; height: 24px; flex: none; align-items: flex-end; margin: 0 -1px; }
.ptab { height: 24px; border: 1px solid #aaa79f; border-bottom: 0; border-radius: 4px 0 0 0; background: #f2f1f0; display: flex; align-items: center; padding: 0 3px 1px 6px; }
.ptab.white { background: #fff; }
.ptab.off { background: linear-gradient(#f3f2f1, #dbd9d7); height: 23px; border-left: 0; }
.ptab .x { margin: 2px 0 0 auto; }
.strip { flex: 1; height: 23px; border: 1px solid #c6c4c0; border-left: 0; border-bottom: 0; border-radius: 0 4px 0 0; background: linear-gradient(#f3f2f1, #dbd9d7); display: flex; justify-content: flex-end; padding: 5px 7px; }
.min { width: 10px; height: 9px; }
.appearance .ptab { width: 112px; }
.layout .ptab { width: 75px; }
.row { flex: none; }
.tbtn { height: 27px; border: 1px solid #aeaba7; border-radius: 4px; background: linear-gradient(#e4e2e0, #efeeed); display: inline-flex; align-items: center; justify-content: center; box-shadow: inset 0 1px 2px rgba(0,0,0,.12); }
.modes { display: grid; grid-template-columns: 2px 55px 7px 43px 23px 28px 32px 28px 32px; height: 32px; align-items: center; justify-items: center; border-bottom: 1px solid #d5d3d0; padding-top: 1px; margin-right: -10px; }
.modes { grid-template-columns: 2px 55px 7px 43px 19px 28px 32px 28px 32px; }
.modes .tbtn { width: 100%; }
.vs { width: 1px; height: 18px; background: #d3d1ce; }
.acol { font: 700 15px/15px "Open Sans", sans-serif; color: #000; border-bottom: 3px solid #999; width: 18px; text-align: center; }
.tt { font: 700 16px/16px "Open Sans", sans-serif; color: #111; letter-spacing: -1px; }
.tt small { font-size: 12px; }
.kinds { display: flex; height: 31px; align-items: center; padding-left: 7px; border-bottom: 1px solid #d5d3d0; }
.kinds .tbtn { width: 73px; margin-left: 7px; }
.combo { border: 1px solid #aaa8a5; border-radius: 4px; background: #fff; display: flex; align-items: center; padding-left: 3px; color: #3c3c3c; }
.combo b { margin-left: auto; align-self: stretch; width: 25px; border-left: 1px solid #b4b2af; background: linear-gradient(#fdfdfd, #eeedec); border-radius: 0 4px 4px 0; display: flex; align-items: center; justify-content: center; }
.combo b svg { width: 8px; height: 6px; opacity: .65; }
.c1 { width: 247px; height: 25px; margin: 5px 0 0 5px; flex: none; }
.color { display: flex; align-items: center; height: 54px; padding-left: 12px; }
.ramp { width: 151px; height: 7px; margin-left: 24px; border: 1px solid #7d7f90; border-radius: 4px; background: linear-gradient(90deg, #e8f3f8, #8d95c8 55%, #7c0a7c); margin-bottom: 2px; }
.pal { width: 20px; height: 22px; border-top: 1px solid #fff; border-bottom: 1px solid #d8d6d4; margin: 0 0 24px 11px; padding: 5px 0 0 9px; }
.spline { height: 30px; margin-top: 18px; border-top: 1px solid #fbfbfb; border-bottom: 1px solid #d5d3d0; display: flex; align-items: center; padding-left: 7px; color: #1528f0; width: 254px; }
.spline svg { margin: 0 11px 0 5px; }
.spline i { width: 1px; height: 17px; background: #d3d1ce; }
.apply { display: flex; height: 33px; }
.linkbox { width: 136px; border-top: 1px solid #fbfbfb; border-bottom: 1px solid #d0cecb; display: flex; justify-content: flex-end; align-items: center; padding-right: 7px; }
.btn { border: 1px solid #b3b1ae; border-radius: 4px; background: linear-gradient(#fff, #ebeae8); display: inline-flex; align-items: center; justify-content: center; flex: none; padding-bottom: 1px; }
.apply .btn { width: 96px; height: 27px; margin: 1px 0 0 19px; gap: 7px; padding-left: 3px; }
.play { width: 10px; height: 14px; }

.c2 { width: 245px; height: 35px; margin: 6px 0 0 6px; flex: none; }
.c2 b { width: 35px; }
.run { display: flex; justify-content: space-between; align-items: center; padding: 0 6px 0 7px; height: 32px; margin-top: 12px; }
.run > svg { margin-bottom: 4px; }
.run .btn { width: 78px; height: 31px; gap: 7px; margin-bottom: 1px; padding-right: 3px; }
.group { display: flex; align-items: center; height: 25px; padding: 4px 0 0 6px; }
.group svg { margin-right: 1px; }
.props { height: 133px; margin: 0 5px; background: #fff; border-bottom: 1px solid #a5a3a0; color: #3c3c3c; }
.prop { display: grid; grid-template-columns: 124px 1fr; height: 20px; border-bottom: 1px solid #ecebea; line-height: 19px; }
.prop > span { padding-left: 2px; border-right: 1px solid #ecebea; white-space: nowrap; }
.prop > span + span { border: 0; padding-left: 3px; }
.prop .ck { padding: 1px 0 0 2px; }
.desc { height: 77px; display: flex; justify-content: space-between; padding: 2px 7px 0; }
.desc strong { font: 700 14px/28px "DejaVu Sans", sans-serif; }
.help { width: 28px; height: 28px; border-top: 1px solid #fff; border-bottom: 1px solid #d0cecb; padding: 5px 6px; }
.presets { border-top: 1px solid #fcfcfc; flex: 1; display: flex; padding: 5px 0 0 7px; }
.presets svg { margin: 2px 6px 0 0; }
.presets span + span { margin-left: 13px; }

.graphpanel { height: 632px; padding-top: 1px; display: flex; flex-direction: column; }
.gtabs { height: 28px; flex: none; display: flex; border-bottom: 1px solid #aaa79f; }
.gtab { width: 75px; margin-bottom: -1px; border: 1px solid #aaa79f; border-bottom: 0; border-radius: 4px 4px 0 0; background: #f2f1f0; display: flex; align-items: center; padding: 0 3px 2px 8px; }
.gtab .x { margin-left: auto; }
.gtabs .navs { padding: 3px 5px 5px 0; }
.gbody { flex: 1; border: 1px solid #aaa79f; border-top: 0; min-height: 0; display: flex; flex-direction: column; overflow: hidden; }
.status { height: 28px; flex: none; display: flex; align-items: center; font: 400 9.500px/14px "Open Sans", sans-serif; color: #333; }
.glogo { width: 27px; height: 28px; background: #fff; color: #111; margin-right: 4px; display: flex; align-items: center; }
.status a { color: #1122ee; margin-left: 7px; font-weight: 500; }
.status i { width: 1px; height: 18px; background: #d3d1ce; margin-left: 69px; }
.work { display: grid; grid-template-columns: 32px 764px; height: 371px; flex: none; }
.tools > div { height: 28px; display: flex; align-items: center; justify-content: center; }
.tools hr { margin: 5px 7px 6px; border: 0; height: 1px; background: #d3d1ce; }
.tools .tbtn { width: 26px; height: 26px; }
.tools .gap { margin-top: 8px; }
.pink { font: 700 12px/11px "Liberation Serif", serif; color: #333; border-bottom: 3px solid #f5457f; width: 16px; text-align: center; }
.shade { font: 700 11px/12px "Liberation Serif", serif; color: #333; text-shadow: 3px 1px 1px #aaa; }
#graph { background: #ccc; }
.edge { fill: none; stroke: #505050; stroke-dasharray: 2 1; }
.glabel { font: 5.500px "DejaVu Sans", sans-serif; fill: #1c1c1c; opacity: .9; }

.vizbar { height: 35px; flex: none; display: grid; align-items: center; justify-items: center; border-bottom: 1px solid #d3d1ce; padding-bottom: 2px; grid-template-columns: 13px 26px 30px 4px 19px 26px 14px 26px 2px 26px 30px 6px 86px 24px 18px 36px 3px 104px 13px 87px 6px 16px 4px 20px 1fr 26px; }
.sq { width: 26px; height: 26px; }
.bigT { font: 700 19px/20px "Liberation Serif", serif; color: #333; -webkit-text-stroke: .6px #333; }
.outT { font: 700 18px/20px "Liberation Serif", serif; color: #fbfbfb; -webkit-text-stroke: .8px #999; }
.slider { position: relative; width: 87px; height: 4px; border: 1px solid #c5c3c0; border-bottom-color: #e9e8e6; border-radius: 2px; background: #e3e1df; }
.slider svg { position: absolute; top: -9px; width: 28px; height: 20px; }
.fa { font: 700 14px/16px "Liberation Serif", serif; color: #333; display: flex; align-items: center; gap: 1px; }
.bl { color: #2e58b8; }
.swatch { width: 16px; height: 16px; background: #9b0d9b; border: 1px solid #6b0a2a; }
.setTabs { height: 41px; flex: none; display: flex; align-items: flex-end; padding-left: 2px; border-top: 1px solid #dddbd8; margin-top: 2px; }
.st { height: 29px; width: 53px; border: 1px solid #b9b7b3; border-bottom: 0; border-radius: 4px 4px 0 0; background: linear-gradient(#f0efee, #d9d7d5); color: #6b6b6b; display: flex; align-items: center; padding: 4px 0 0 4px; }
.st + .st { width: 52px; margin-left: 1px; padding-left: 5px; }
.st + .st.on { width: 57px; height: 31px; background: #fafafa; color: #3c3c3c; padding: 2px 0 0 6px; margin-left: -1px; }
.settings { flex: 1; border: 1px solid #aaa79f; border-right: 0; border-radius: 0 0 0 4px; margin: 0 0 2px 2px; display: grid; grid-template-columns: 321px 320px 153px; min-height: 0; }
.set { border-right: 1px solid #d5d3d0; margin: 3px 0; }
.line { display: flex; align-items: center; }
.l1 { padding: 9px 0 0 13px; height: 30px; gap: 6px; }
.l2 { padding-left: 28px; height: 28px; }
.l2 > span:first-child { margin-left: -1px; }
.l3 { padding-left: 28px; height: 49px; }
.font { width: 123px; height: 27px; margin-left: 18px; }
.bi { font-weight: 700; font-style: italic; color: #333; }
.cl { margin-left: 24px; }
.chip { width: 24px; height: 28px; margin-left: 14px; }
.chip i { width: 13px; height: 13px; background: #9b0d9b; border: 1px solid #111; }
.wide { width: 211px; margin-left: 26px; }
.box { width: 14px; height: 14px; border: 1px solid #999; border-radius: 3px; background: #fff; }
.two .l1 { padding-left: 21px; gap: 7px; }
.two .l2 { margin-top: 6px; padding-left: 39px; }
.two .l3 { padding-left: 38px; }
.two .l2, .two .l3 { color: #a9a8a7; }
.two .font { width: 112px; margin-left: 17px; border-color: #cfcdca; background: #efeeed; }
.two .chip { border-color: #cfcdca; background: #efeeed; }
.two .chip i { background: #d9d9d9; border-color: #bbb; }
.two .wide { width: 200px; margin-left: 26px; }
.two .slider svg { opacity: .7; }
.three { border: 0; padding: 7px 0 0 21px; overflow: hidden; }
.opt { display: flex; align-items: center; height: 33px; }
.opt > span { width: 42px; }
.opt .combo { width: 90px; height: 25px; margin-left: 11px; flex: none; }
.hide { margin-top: 10px; }

.context .ptab { width: 85px; }
.clip { flex: 1; overflow: hidden; }
.stats { margin-top: -5px; padding-left: 7px; line-height: 19px; }
.stats strong { font-weight: 700; margin-right: 11px; }
.filters .ptab { width: 71px; padding-left: 6px; }
.filters .ptab.off { width: 90px; padding-left: 7px; }
.filters { background: #fff; }
.fbar { height: 31px; flex: none; background: #f2f1f0; border-bottom: 1px solid #d5d3d0; display: flex; align-items: center; padding-left: 7px; }
.fbar i { width: 1px; height: 18px; background: #d3d1ce; margin: 0 10px 0 12px; }
.fbar > svg { margin-right: 11px; }
.aplus { display: flex; align-items: center; font: 700 11px "Liberation Serif", serif; color: #999; margin-left: 2px; }
.tree { height: 260px; flex: none; color: #3c3c3c; }
.root, .node { height: 19px; display: flex; align-items: center; }
.root { padding-left: 5px; } .root span { margin-left: 7px; }
.node { padding-left: 2px; }
.ar { width: 7px; height: 7px; }
.fo { width: 10px; height: 9px; margin: 0 11px 0 13px; }
.split { height: 3px; background: #f0efee; display: flex; gap: 2px; justify-content: center; flex: none; }
.split i { width: 1px; background: #bbb; }
.queries { height: 194px; flex: none; color: #3c3c3c; }
.q1, .q2 { display: flex; align-items: center; height: 19px; }
.q1 { padding-left: 6px; } .q1 span { margin-left: 9px; }
.q2 { padding-left: 20px; font-style: italic; } .q2 span { margin-left: 8px; }
.ffoot { flex: 1; background: #f2f1f0; display: flex; }
.fl { width: 125px; margin: 10px 5px 0 4px; border-top: 1px solid #fff; border-bottom: 1px solid #d0cecb; }
.ffoot .btn { width: 87px; height: 31px; margin-top: 11px; gap: 6px; border-color: #cfcdca; color: #a3a2a1; }
```

FILE: script.js
```js
// Stretch or tighten each label to the width of its slot.
for (const el of document.querySelectorAll('[data-w]')) {
  const r = document.createRange();
  r.selectNodeContents(el);
  const natural = r.getBoundingClientRect().width;
  el.style.letterSpacing = ((+el.dataset.w - natural) / el.textContent.length).toFixed(3) + 'px';
}

// Network: years are the hubs, groups are the small nodes.
const years = [
  ['2008', 617, 300, 28, '#650465', '#96588f', 5], ['2009', 677.5, 284, 25, '#6f1774', '#946f9b', 4],
  ['2000', 743, 307, 27, '#6a0b6c', '#966595', 5], ['2002', 811, 322, 25, '#6a0b6c', '#966595', 4.5],
  ['2003', 689, 375.5, 23, '#6a2b7c', '#8d739a', 3.5], ['2001', 800.5, 389, 21.5, '#6d3783', '#8f7ba2', 3.5],
  ['2007', 650.5, 349.5, 16, '#6d75a8', '#9a9fb9', 2], ['2004', 726.5, 254, 13.5, '#7c8ab4', '#a0a9bf', 1.5],
  ['2006', 772.5, 263, 14, '#7480ac', '#9ea6bf', 2], ['2005', 772.5, 424, 16, '#6d75a8', '#9a9fb9', 2]
];
const small = [
  [706.5,228,9.5],[545.7,317.3,10],[574,312.7,10.5],[453.7,342.3,6.5],[578,295,5.5],[577,363,6],[495,389,4],[567,397,4],[593,407,4],
  [555,238,4.5],[607,245,4],[968,338,9.5],[951,375,9.5],[981,388,5.5],[1051,271,5],[906,259,5],[982,330,5],[968,312,3],[913,291,4],
  [796,232,5],[875,246,5],[822,252,3],[877,299,5],[777,357,8.5],[828,410,6],[879,414,5],[843,333,6],[649,237,4],[722,349,9.5],
  [738,357,8],[722,390,8.5],[714,429,8],[741,372,6],[715,277,6],[718,410,4],[620,338,5],[561,348,4],[900,401,3]
];
const labels = [
  ['Bodo Liberation Tigers (BLT)',516,594,239.5],['Jharkhand Liberation Tigers (JLT)',603.5,695,239.5],['Kuki National Army (KNA)',568,638,246],
  ["Hmar People's Convention Democracy (HPC-D)",512,642.5,285.5],['Harkatul Jihad-e-Islami',547,609,296],['Lashkar-e-Taiba (LeT)',544.5,604,314],
  ['United Liberation Front of Assam (ULFA)',490,598,320],['Achik National Volunteer Council (ANVC)',604,716,320],['Tritiya Prastuti Committee (India)',516.5,612,327],
  ['Karbi National Volunteers (KNV)',614,698,326.5],["National People's Party (Rashtriya Janata Dal - RJD)",446.5,592,334],
  ['Communist Party of India - Maoist (CPI-Maoist)',389,518,343.5],['Jamiat ul-Mujahedin (JuM)',584,655,340],['Kuki Revolutionary Army (KRA)',518,607,349],
  ['Karbi Longri National Liberation Front (KLNLF)',544.5,671,357],['Jaish-e-Mohammad (JeM)',542,611,363.5],['Mahaz-e-Inqilab',617.5,665.5,372],
  ['Save Kashmir Movement Guerrillas',573,670.5,377.5],["People's Committee against Police Atrocities (PCPA)",514,657.5,384],
  ['National Socialist Council of Nagaland-Khaplang (NSCN-K)',414,574,390.5],['Rashtriya Swayamsewak Sangh',585.5,672.5,391],
  ['Karbi Longri North Cachar Liberation Front (KLNLF)',496,637,397.5],["People's Revolutionary Party of Kangleipak (PREPAK)",520.5,666,410],
  ['Deccan Mujahideen',632.5,686.5,404],['Unknown',694,718.5,229],['Vishwa Hindu Parishad (VHP)',698,777,238],
  ["United People's Democratic Solidarity (UPDS)",733,858.5,232],['Praveen Dalam, Al Madina',647.5,722,245],['Kashmir Freedom Force',746,812,244.5],
  ["Bodo People's Front (BPF)",639,713.5,252.5],['Al Hamas Mujahideen',671.5,731,261.5],['Ranbir Sena',734,767,259],['Al-Shuda Brigade, Al-Arifeen',683,760,268],
  ['Lashkar-e-Jhangvi',729,780,274.5],["Naga People's Council (NPC)",729,812,285.5],['Sunni',708,726,278.5],['United Kuki Liberation Front (UKLF) - India',652.5,769,291.5],
  ['Kuki Liberation Army (KLA)',745,819,302],['Muslims',694.5,715,314],['Muslim Separatists',692.5,743,334],['Kashmiri Militants',685,737,339.5],
  ['Muslim Militants',656,700,345],['Rebels',768,784,319],['Black Widows',755,792,328],['Individual',747,770,340],['Other',713,729,349.5],
  ['Islamic Front',734,768,352.5],['Al-Mansoorian',719,749,357.5],['Naxalites',765,789,357.5],['Bandits',712,733,365],['Separatists',770,799,347],
  ['Tamil Nadu Liberation Army',775,852,364],["People's War Group (PWG)",705,778,373.5],["Citizen's Rights Protection Volunteers",778,882,377],
  ['United Democratic Terai Liberation Front (UDTLF)',673,810,384.5],['Karbi Tribe',815,844,384.5],['Maoist Communist Center (MCC)',677,767,391],
  ['Al-Fajr',728,745,397],['Muslim Rebels',750,790,396],["People's Liberation Front of India",719,810,403.5],['Insurgents',688,717,406.5],
  ['Dima Halao Daoga (DHD)',683,753,412.5],['National Democratic Front of Bodoland (NDFB)',650,779,430.5],['Kanglei Yawol Kanna Lup (KYKL)',783,873,409.5],
  ['United National Liberation Front (UNLF)',825,933,416],['Communist Party of India- Marxist',843,938,403.5],['Islamic Fateh',811,848,396.5],
  ['Harakat ul-Mujahidin (HuM)',820,896,391],['National Socialist Council of Nagaland-Isak-Muivah (NSCN-IM)',897,1066,389.5],['Babbar Khalsa International (BKI)',845,937,383],
  ['Hizbul Mujahideen (HM)',918,984,376.5],['Liberation Tigers of Tamil Eelam (LTTE)',825,934,370.5],['Al Nazeen Group',850,900,355.5],['Akhilesh Singh Gang',807,863,348.5],
  ['Al Badr',868,887,345],['Indian Mujahideen',889,940,346.5],['United Bengali Liberation Front (UBLF)',802,907,339],['National Liberation Front of Tripura (NLFT)',910,1027,339],
  ['Maoists',836,856,333],['Adivasi National Liberation Army (ANLA)',926,1038,331.5],['Communist Party of India- Marxist-Leninist',833,951,325.5],
  ["People's Liberation Army (India)",818,906,318],['All India Anna Dravida Munetra Kazgan Party',906,1030,314],['Al Nasrin (India)',821,867,311],
  ['Kuki National Front (KNF)',868,937,307],['Kangleipak Communist Party (KCP)',827,925,301],['Al-Umar Mujahideen',883,939,293],['United Jihad Council',798,854,292],
  ['All Kamatapur Liberation Force',924,1010,285.5],['Tehrik-e-Galba Islam',827,884,285.5],['Bhumi Uchched Pratirodh Committee (BUPC)',847,971,279.5],
  ['Militants',808,831,278.5],['Kamtapur Liberation Organization (KLO)',996,1106,272],['Miscreants',779,808,272],['Tehrik al-Mojahedin',800,854,266.5],
  ['Students Islamic Movement of India (SIMI)',848,964,260],["People's United Liberation Front (PULF)",768,876,254],['All Tripura Tiger Force (ATTF)',835,916,247.5],
  ['Naga People',803,837,225.5]
];
let out = '';
const line = (x1, y1, x2, y2, w, o) => out += `<line class="edge" x1="${x1}" y1="${y1}" x2="${x2}" y2="${y2}" stroke-width="${w}" opacity="${o}"/>`;
small.forEach(([x, y, r], i) => {
  const n = r > 7 ? 8 : r > 4.5 ? 4 : 2;
  const near = years.slice().sort((a, b) => Math.hypot(a[1] - x, a[2] - y) - Math.hypot(b[1] - x, b[2] - y));
  for (let k = 0; k < n; k++) { const t = near[(k * 3 + i) % (r > 4.5 ? 10 : 7)]; line(t[1], t[2], x, y, .55, .65); }
});
labels.forEach(([, a, b, y], i) => {
  const x = (a + b) / 2;
  for (let k = 0; k < 3; k++) { const t = years[(i * 3 + k * 4) % 7]; if (Math.hypot(t[1] - x, t[2] - y) < 190) line(t[1], t[2], x, y, .5, .6); }
});
const arrow = (x1, y1, x2, y2, w, h) => {
  const d = Math.hypot(x2 - x1, y2 - y1), ux = (x2 - x1) / d, uy = (y2 - y1) / d, bx = x2 - ux * h, by = y2 - uy * h, s = h * .42;
  out += `<path d="M${x1} ${y1}L${bx} ${by}" stroke="#666" stroke-width="${w}"/><path d="M${x2} ${y2}L${bx - uy * s} ${by + ux * s}L${bx + uy * s} ${by - ux * s}z" fill="#606060"/>`;
};
arrow(617, 300, 458, 341, 6, 27);
arrow(617, 300, 701, 235, 5, 16);
arrow(677, 284, 704, 238, 3.5, 12);
arrow(689, 375, 706, 238, 2, 10);
arrow(617, 300, 668, 287, 6, 4);
arrow(800, 264, 716, 232, 1, 7);
arrow(743, 307, 710, 238, 1.500, 8);
arrow(743, 307, 789, 389, 1.400, 6);
arrow(689, 375, 674, 300, 1, 5);
arrow(743, 330, 764, 410, 1.200, 6);
for (const [x, y, r] of small) out += `<circle cx="${x}" cy="${y}" r="${r}" fill="${r > 4.5 ? '#a9b4cc' : '#b4c4d0'}" fill-opacity="${r > 7 ? .8 : .4}" stroke="#8f9cc0" stroke-opacity="${r > 7 ? .7 : .2}" stroke-width="1.500"/>`;
for (const [, x, y, r, s, f, w] of years) out += `<circle cx="${x}" cy="${y}" r="${r}" fill="${f}" fill-opacity=".95" stroke="${s}" stroke-width="${w}"/>`;
for (const [t, x, y] of years) out += `<text class="glabel" x="${x - 7}" y="${y + 2.500}" textLength="14">${t}</text>`;
for (const [t, a, b, y] of labels) out += `<text class="glabel" x="${a}" y="${y + 1.900}" textLength="${b - a}" lengthAdjust="spacingAndGlyphs">${t}</text>`;
document.getElementById('graph').innerHTML = out;
```
